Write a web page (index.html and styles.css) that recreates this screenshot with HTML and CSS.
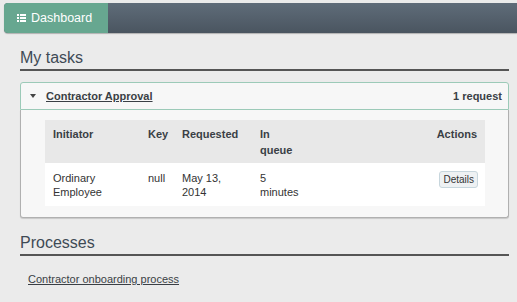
FILE: index.html
```html
<!DOCTYPE html>
<html>
<head>
  <title>Dashboard</title>
  <link rel="stylesheet" href="styles.css">
</head>
<body>
  <div class="navbar">
    <a class="nav-tab" href="#">
      <svg class="nav-icon" width="9" height="8" viewBox="0 0 9 8">
        <rect x="0" y="0" width="2" height="2" fill="#fff"/>
        <rect x="3" y="0" width="6" height="2" fill="#fff"/>
        <rect x="0" y="3" width="2" height="2" fill="#fff"/>
        <rect x="3" y="3" width="6" height="2" fill="#fff"/>
        <rect x="0" y="6" width="2" height="2" fill="#fff"/>
        <rect x="3" y="6" width="6" height="2" fill="#fff"/>
      </svg>
      Dashboard
    </a>
  </div>

  <div class="content">
    <h2 class="section-title">My tasks</h2>

    <div class="panel">
      <div class="panel-head">
        <span class="caret"></span>
        <a class="task-name" href="#">Contractor Approval</a>
        <span class="count">1 request</span>
      </div>
      <div class="panel-body">
        <table class="tasks">
          <thead>
            <tr>
              <th class="col-init">Initiator</th>
              <th class="col-key">Key</th>
              <th class="col-req">Requested</th>
              <th class="col-queue">In queue</th>
              <th class="col-act">Actions</th>
            </tr>
          </thead>
          <tbody>
            <tr>
              <td>Ordinary Employee</td>
              <td>null</td>
              <td>May 13, 2014</td>
              <td>5 minutes</td>
              <td class="col-act"><button class="btn">Details</button></td>
            </tr>
          </tbody>
        </table>
      </div>
    </div>

    <h2 class="section-title processes">Processes</h2>
    <a class="process-link" href="#">Contractor onboarding process</a>
  </div>
</body>
</html>
```
FILE: styles.css
```css
body {
  margin: 0;
  background: #ebebeb;
  font-family: "Liberation Sans", Arial, sans-serif;
  color: #333;
}

.navbar {
  margin: 3px 0 0 4px;
  height: 30px;
  display: flex;
  background: linear-gradient(#5f6c79, #4a5560);
  border-radius: 4px 0 0 4px;
  box-shadow: 0 1px 1px rgba(0, 0, 0, 0.25);
}

.nav-tab {
  display: flex;
  align-items: center;
  gap: 5px;
  width: 91px;
  padding-left: 13px;
  background: #67a790;
  border-radius: 4px 0 0 4px;
  color: #fff;
  font-size: 12.5px;
  text-decoration: none;
}

.content {
  padding: 15px 8px 0 20px;
}

.section-title {
  margin: 0;
  padding-bottom: 1px;
  font-size: 16px;
  font-weight: normal;
  color: #3e4a55;
  line-height: 20px;
  border-bottom: 2px solid #555;
}

.panel {
  margin-top: 11px;
}

.panel-head {
  display: flex;
  align-items: center;
  height: 26px;
  padding: 0 6px 0 9px;
  background: #f7f7f7;
  border: 1px solid #9ccab8;
  border-radius: 3px 3px 0 0;
  font-size: 11px;
  font-weight: bold;
  color: #3a3f45;
}

.caret {
  width: 0;
  height: 0;
  border-left: 3px solid transparent;
  border-right: 3px solid transparent;
  border-top: 4px solid #444;
  margin-right: 10px;
}

.task-name {
  color: #3a3f45;
  flex: 1;
}

.panel-body {
  padding: 10px 23px 11px 24px;
  background: #f7f7f7;
  border: 1px solid #b0b0b0;
  border-top: none;
  border-radius: 0 0 3px 3px;
  box-shadow: 0 1px 1px rgba(0, 0, 0, 0.15);
}

.tasks {
  width: 100%;
  table-layout: fixed;
  border-collapse: collapse;
  font-size: 11px;
}

.tasks th {
  background: #e8e8e8;
  text-align: left;
  vertical-align: top;
  padding: 6px 8px 5px;
  line-height: 16px;
  color: #3a3f45;
}

.tasks td {
  background: #fff;
  vertical-align: top;
  padding: 8px 8px 7px;
  line-height: 14px;
  color: #333;
}

.col-init { width: 79px; }
.col-key { width: 18px; }
.col-req { width: 62px; }
.col-queue { width: 40px; }

.tasks .col-act {
  text-align: right;
}

.tasks td.col-act {
  padding-right: 7px;
}

.btn {
  font-family: inherit;
  font-size: 10px;
  color: #333;
  padding: 2px 3px;
  background: #eef1f3;
  border: 1px solid #c7d6dd;
  border-radius: 3px;
}

.processes {
  margin-top: 15px;
}

.process-link {
  display: block;
  margin: 17px 0 0 8px;
  font-size: 11px;
  color: #3a3f45;
}
```
